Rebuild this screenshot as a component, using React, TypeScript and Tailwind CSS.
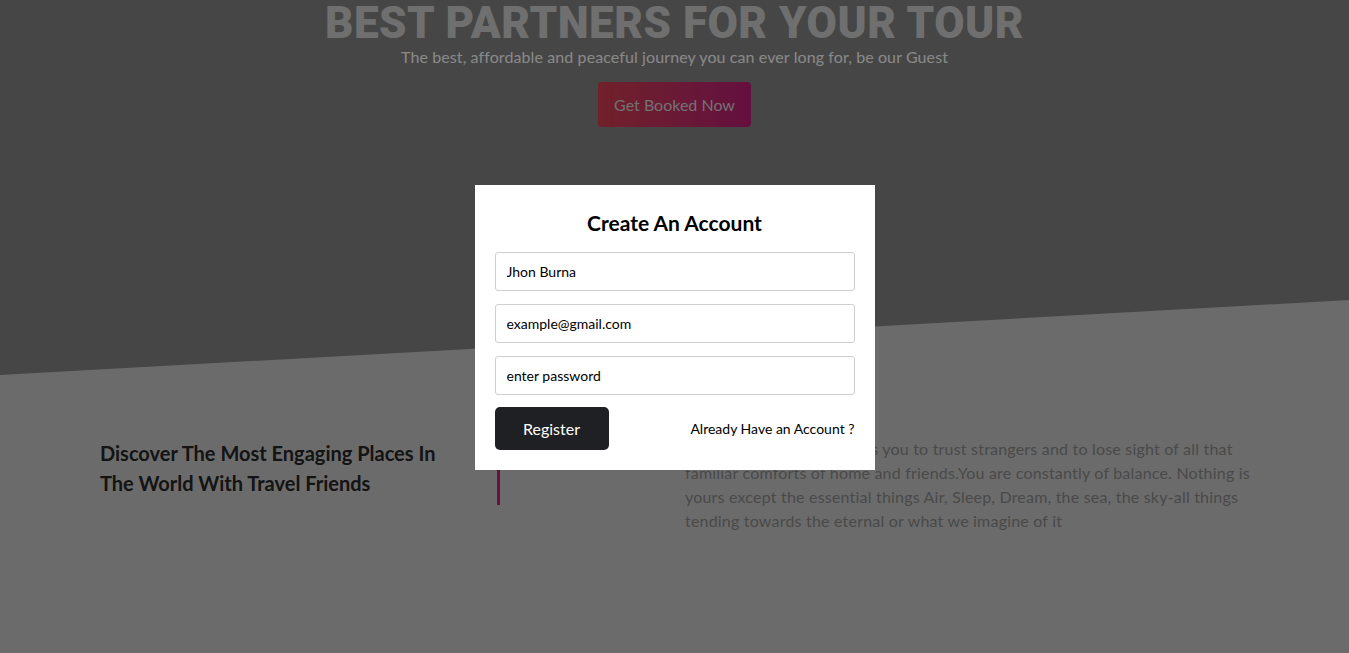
import { useState } from 'react';

const body = { fontFamily: 'Lato, "Open Sans", sans-serif' };

export default function App() {
  const [name, setName] = useState('Jhon Burna');
  const [email, setEmail] = useState('example@gmail.com');
  const [pass, setPass] = useState('');

  return (
    <div className="relative h-[653px] w-full overflow-hidden bg-[#b2b2b2]" style={body}>
      {/* Hero */}
      <section className="h-[375px] bg-[#757575] [clip-path:polygon(0_0,100%_0,100%_80%,0_100%)]">
        <div className="flex flex-col items-center">
          <h1 className="mt-[-3px] font-['Roboto',sans-serif] text-[44px] font-black leading-[52px] tracking-[0.5px] text-[#b9b9b9]">
            BEST PARTNERS FOR YOUR TOUR
          </h1>
          <p className="mt-[-4px] text-[16px] leading-[24px] tracking-[0.1px] text-[#e3e3e3]">
            The best, affordable and peaceful journey you can ever long for, be our Guest
          </p>
          <button className="mt-[13px] h-[45px] w-[153px] rounded bg-gradient-to-r from-[#bc3746] to-[#a71969] text-[16px] text-[#bebebe]">
            Get Booked Now
          </button>
        </div>
      </section>

      {/* About */}
      <section className="flex items-start px-[100px] pt-[63px]">
        <h2 className="w-[362px] shrink-0 text-[20px] font-bold leading-[30px] text-[#222222]">
          Discover The Most Engaging Places In The World With Travel Friends
        </h2>
        <div className="ml-[35px] mt-[31px] h-[36px] w-[3px] shrink-0 bg-[#b11b6b]" />
        <p className="ml-[185px] mt-[-1px] w-[570px] shrink-0 whitespace-nowrap text-[16px] leading-[24px] tracking-[0.2px] text-[#7b7b7b]">
          Traveling is brutal. It forces you to trust strangers and to lose sight of all that
          <br />
          familiar comforts of home and friends.You are constantly of balance. Nothing is
          <br />
          yours except the essential things Air, Sleep, Dream, the sea, the sky-all things
          <br />
          tending towards the eternal or what we imagine of it
        </p>
      </section>

      {/* Modal */}
      <div className="absolute inset-0 flex items-center justify-center bg-black/40 pt-[2px]">
        <div className="w-[400px] bg-white px-5 pb-5 pt-[23px]">
          <h3 className="text-center text-[21px] font-bold leading-[30px] text-black">Create An Account</h3>
          <div className="mt-[14px] flex flex-col gap-[13px]">
            <input value={name} onChange={e => setName(e.target.value)} className="h-[39px] w-full rounded-[3px] border border-[#cfcfcf] px-[11px] text-[14px] text-black outline-none" />
            <input value={email} onChange={e => setEmail(e.target.value)} className="h-[39px] w-full rounded-[3px] border border-[#cfcfcf] px-[11px] text-[14px] text-black outline-none" />
            <input type="text" value={pass} placeholder="enter password" onChange={e => setPass(e.target.value)} className="h-[39px] w-full rounded-[3px] border border-[#cfcfcf] px-[11px] text-[14px] text-black outline-none placeholder:text-black" />
          </div>
          <div className="mt-[12px] flex items-center justify-between">
            <button className="h-[43px] w-[114px] rounded-[5px] bg-[#1f2023] text-[16px] text-white">Register</button>
            <span className="text-[14px] text-black">Already Have an Account ?</span>
          </div>
        </div>
      </div>
    </div>
  );
}
